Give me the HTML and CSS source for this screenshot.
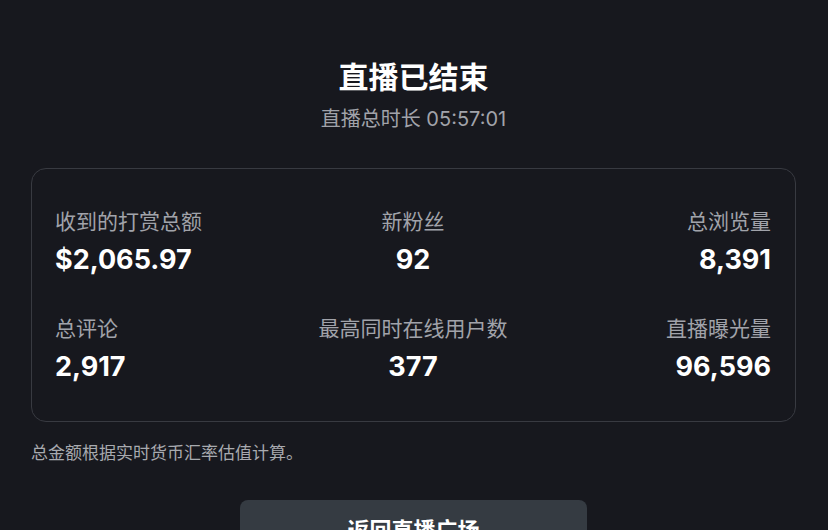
FILE: index.html
```html
<!DOCTYPE html>
<html lang="zh-CN">
<head>
<meta charset="UTF-8" />
<meta name="viewport" content="width=device-width, initial-scale=1" />
<title>直播已结束</title>
<link rel="stylesheet" href="styles.css">
</head>
<body>

<div class="container">
  <div class="header">
    <h1>直播已结束</h1>
    <p class="duration">直播总时长 05:57:01</p>
  </div>

  <div class="stats">
    <div class="stat left">
      <span class="label">收到的打赏总额</span>
      <span class="value">$2,065.97</span>
    </div>
    <div class="stat center">
      <span class="label">新粉丝</span>
      <span class="value">92</span>
    </div>
    <div class="stat right">
      <span class="label">总浏览量</span>
      <span class="value">8,391</span>
    </div>
    <div class="stat left">
      <span class="label">总评论</span>
      <span class="value">2,917</span>
    </div>
    <div class="stat center">
      <span class="label">最高同时在线用户数</span>
      <span class="value">377</span>
    </div>
    <div class="stat right">
      <span class="label">直播曝光量</span>
      <span class="value">96,596</span>
    </div>
  </div>

  <p class="note">总金额根据实时货币汇率估值计算。</p>

  <div class="actions">
    <button type="button">返回直播广场</button>
  </div>
</div>

</body>
</html>
```

FILE: styles.css
```css
/* Basic reset */
* {
  box-sizing: border-box;
}
body {
  background: #17181e;
  margin: 0;
  font-family: Inter, "Noto Sans CJK SC", sans-serif;
  color: #fff;
  overflow: hidden;
  height: 530px;
}
.container {
  padding: 57px 32px 0 31px;
}
.header {
  text-align: center;
}
h1 {
  margin: 0;
  font-size: 30px;
  line-height: 40px;
  font-weight: 700;
}
.duration {
  margin: 9px 0 0;
  font-size: 20px;
  line-height: 26px;
  color: #a1a3aa;
}
.stats {
  margin-top: 36px;
  border: 1px solid #383a41;
  border-radius: 15px;
  padding: 39px 24px 37px 23px;
  display: grid;
  grid-template-columns: 1fr 1fr 1fr;
  row-gap: 38px;
}
.stat {
  display: flex;
  flex-direction: column;
  gap: 7px;
}
.stat.center {
  align-items: center;
}
.stat.right {
  align-items: flex-end;
}
.label {
  font-size: 21px;
  line-height: 28px;
  color: #a1a3aa;
}
.value {
  font-size: 27px;
  line-height: 34px;
  font-weight: 700;
  color: #fff;
}
.note {
  margin: 19px 0 0;
  font-size: 17px;
  line-height: 24px;
  color: #a8aaaf;
}
.actions {
  margin-top: 35px;
  display: flex;
  justify-content: center;
}
button {
  width: 347px;
  height: 56px;
  border: none;
  border-radius: 8px;
  background: #353b42;
  color: #fff;
  font-family: inherit;
  font-size: 22px;
  font-weight: 700;
  cursor: pointer;
}
```
